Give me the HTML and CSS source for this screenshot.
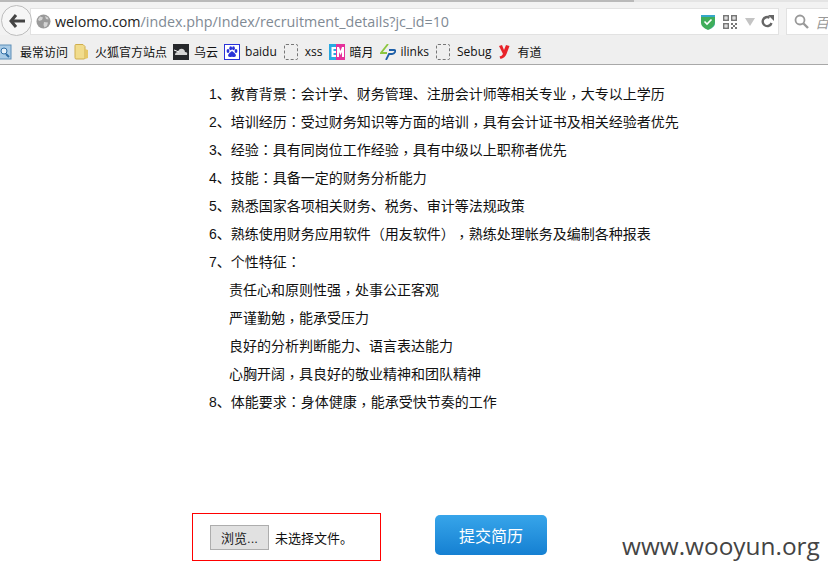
FILE: index.html
```html
<!DOCTYPE html>
<html lang="en">
<head>
    <meta charset="UTF-8">
    <meta name="viewport" content="width=device-width, initial-scale=1.0">
    <title>招聘详情</title>
    <link rel="stylesheet" href="styles.css">
</head>
<body>
    <div class="tabstrip"></div>

    <!-- Browser toolbar -->
    <div class="toolbar">
        <div class="urlbar">
            <svg class="globe" width="15" height="15" viewBox="0 0 15 15"><circle cx="7.5" cy="7.5" r="7" fill="#9a9a9a"/><path d="M4 2.5l3 1-1 2.5-3 1-1-1.500zM8 8l4 .5-1 3.500-2.500 1.500L7.500 11zM9 2l3 1.500 .5 2-2.500-.5z" fill="#d4d4d4"/></svg>
            <span class="url"><span class="host">welomo.com</span>/index.php/Index/recruitment_details?jc_id=10</span>
            <svg class="shield" width="14" height="16" viewBox="0 0 14 16"><path d="M0 1h14v8q0 4-7 7Q0 13 0 9z" fill="#3fae5a"/><path d="M0 1h14v2H0zM7 16q7-3 7-7V7q0 6-7 9z" fill="#35a7c9"/><path d="M3.500 7.500l2.500 2.500 4.500-4.500" fill="none" stroke="#fff" stroke-width="1.600"/></svg>
            <svg class="qr" width="14" height="14" viewBox="0 0 14 14" fill="#777"><path d="M0 0h6v6H0zM1.500 1.500v3h3v-3zM8 0h6v6H8zM9.500 1.500v3h3v-3zM0 8h6v6H0zM1.500 9.500v3h3v-3zM8 8h2v2H8zM12 8h2v2h-2zM10 10h2v2h-2zM8 12h2v2H8zM12 12h2v2h-2zM2.500 2.500h1v1h-1zM10.500 2.500h1v1h-1zM2.500 10.500h1v1h-1z"/></svg>
            <span class="dropdown"></span>
            <svg class="reload" width="13" height="13" viewBox="0 0 13 13"><path d="M10.500 8A4.500 4.500 0 1 1 8.500 2.700" fill="none" stroke="#666" stroke-width="2.400"/><path d="M7 0h6v6z" fill="#666"/></svg>
        </div>
        <div class="searchbar">
            <svg width="15" height="15" viewBox="0 0 15 15"><circle cx="6" cy="6" r="4.500" fill="none" stroke="#999" stroke-width="1.800"/><path d="M9.500 9.500L14 14" stroke="#999" stroke-width="2.400"/></svg>
            <span class="search-text">百度</span>
        </div>
    </div>

    <!-- Back button sits over the url bar -->
    <div class="back-btn">
        <svg width="16" height="14" viewBox="0 0 16 14"><path d="M7 1L2 7l5 6M2 7h14" fill="none" stroke="#444" stroke-width="3"/></svg>
    </div>

    <!-- Bookmarks -->
    <div class="bookmarks">
        <span class="bm">
            <svg class="bm-icon" width="15" height="16" viewBox="0 0 15 16"><rect x="-2" y="1" width="13" height="14" fill="#a9cbe6" stroke="#5f8fb8"/><circle cx="4" cy="7" r="3" fill="#e8f2fa" stroke="#2f6ea5"/><path d="M6 10l3 3" stroke="#2f6ea5" stroke-width="2"/></svg>最常访问
        </span>
        <span class="bm">
            <svg class="bm-icon" width="16" height="16" viewBox="0 0 16 16"><path d="M1 1.500q0-1 1-1h7l2 2v11q0 1.500-1 1.500H2q-1 0-1-1.500z" fill="#f1dc8c" stroke="#cfae4e"/><path d="M11 5l3 1v8l-3 1z" fill="#e6c766"/></svg>火狐官方站点
        </span>
        <span class="bm">
            <svg class="bm-icon" width="16" height="16" viewBox="0 0 16 16"><rect width="16" height="16" fill="#26282b"/><path d="M2 11q0-3 3-3 1-4 5-3 2 1 2 3 3 0 2 3z" fill="#d5d5d5"/><path d="M1 6l5 2" stroke="#fff"/></svg>乌云
        </span>
        <span class="bm">
            <svg class="bm-icon" width="16" height="16" viewBox="0 0 16 16"><rect x=".5" y=".5" width="15" height="15" fill="#fff" stroke="#2a32d8"/><g fill="#2a32d8"><ellipse cx="4" cy="7" rx="1.400" ry="2"/><ellipse cx="6.700" cy="4.300" rx="1.400" ry="2"/><ellipse cx="9.500" cy="4.300" rx="1.400" ry="2"/><ellipse cx="12" cy="7" rx="1.400" ry="2"/><path d="M8 7q-3 2-4 4 0 2.500 2.500 2 1.500-.5 3 0 2.500.5 2.500-2-1-2-4-4z"/></g></svg>baidu
        </span>
        <span class="bm">
            <span class="bm-blank"></span>xss
        </span>
        <span class="bm">
            <svg class="bm-icon" width="16" height="16" viewBox="0 0 16 16"><path d="M0 0h7v16H0z" fill="#29a9e1"/><path d="M2.500 3H7v2H4.500v2H7v2H4.500v2H7v2H2.500z" fill="#fff"/><path d="M7 0h9v16H7z" fill="#e5329b"/><path d="M8 3h2l1.500 4L13 3h2v10h-2V8l-1.500 3L10 8v5H8z" fill="#fff"/></svg>暗月
        </span>
        <span class="bm">
            <svg class="bm-icon" width="16" height="16" viewBox="0 0 16 16"><path d="M8 0L1 9h6" fill="none" stroke="#8cc63f" stroke-width="1.800"/><path d="M9 6h5q2 0 1 2-1 2-3 2H9l-3 6" fill="none" stroke="#1d5fa8" stroke-width="1.800"/></svg>ilinks
        </span>
        <span class="bm">
            <span class="bm-blank"></span>Sebug
        </span>
        <span class="bm">
            <svg class="bm-icon" width="15" height="14" viewBox="0 0 15 14"><path d="M1 1l3-1 2 5 2-5 3.500 1-3 8q-1.500 4-6 5l-1-2.500q2.500-.5 3.500-2.500z" fill="#e8232a"/></svg>有道
        </span>
    </div>

    <main class="page">
        <ul class="duties">
            <li>1、教育背景<span class="mid">：</span>会计学、财务管理、注册会计师等相关专业<span class="mid comma">，</span>大专以上学历</li>
            <li>2、培训经历<span class="mid">：</span>受过财务知识等方面的培训<span class="mid comma">，</span>具有会计证书及相关经验者优先</li>
            <li>3、经验<span class="mid">：</span>具有同岗位工作经验<span class="mid comma">，</span>具有中级以上职称者优先</li>
            <li>4、技能<span class="mid">：</span>具备一定的财务分析能力</li>
            <li>5、熟悉国家各项相关财务、税务、审计等法规政策</li>
            <li>6、熟练使用财务应用软件（用友软件）<span class="mid comma">，</span>熟练处理帐务及编制各种报表</li>
            <li>7、个性特征<span class="mid">：</span></li>
            <li class="sub">责任心和原则性强<span class="mid comma">，</span>处事公正客观</li>
            <li class="sub">严谨勤勉<span class="mid comma">，</span>能承受压力</li>
            <li class="sub">良好的分析判断能力、语言表达能力</li>
            <li class="sub">心胸开阔<span class="mid comma">，</span>具良好的敬业精神和团队精神</li>
            <li>8、体能要求<span class="mid">：</span>身体健康<span class="mid comma">，</span>能承受快节奏的工作</li>
        </ul>

        <div class="apply-row">
            <div class="file-box">
                <span class="file-btn">浏览...</span>
                <span class="file-name">未选择文件。</span>
            </div>
            <a class="submit-btn">提交简历</a>
        </div>
    </main>

    <div class="watermark">www.wooyun.org</div>
</body>
</html>
```

FILE: styles.css
```css
body {
    font-family: "Liberation Sans", "Noto Sans CJK SC", sans-serif;
    margin: 0;
    padding: 0;
    height: 576px;
    overflow: hidden;
    background-color: #fff;
    color: #111;
    position: relative;
    text-spacing-trim: space-all;
}

.tabstrip {
    height: 2px;
    background: linear-gradient(to right, #b9b9b9 634px, #e4e4e4 634px);
}

/* Toolbar */
.toolbar {
    height: 33px;
    background-color: #f2f2f2;
    display: flex;
    align-items: flex-start;
    padding: 6px 0 0 30px;
    box-sizing: border-box;
    gap: 7px;
}

.urlbar {
    width: 749px;
    height: 27px;
    flex: none;
    background-color: #fff;
    border: 1px solid #e2e2e2;
    box-sizing: border-box;
    display: flex;
    align-items: center;
    padding: 0 4px 0 5px;
}

.globe {
    flex: none;
}

.url {
    margin-left: 4px;
    font-family: "Open Sans", sans-serif;
    font-size: 14.3px;
    color: #7f8a94;
    white-space: nowrap;
    flex: 1;
}

.host {
    color: #222;
}

.shield {
    margin-right: 8px;
}

.qr {
    margin-right: 8px;
}

.dropdown {
    width: 0;
    height: 0;
    border-left: 5px solid transparent;
    border-right: 5px solid transparent;
    border-top: 8px solid #c4c4c4;
    margin-right: 6px;
}

.searchbar {
    flex: 1;
    height: 27px;
    background-color: #fff;
    border: 1px solid #e2e2e2;
    border-right: none;
    box-sizing: border-box;
    display: flex;
    align-items: center;
    padding-left: 7px;
    gap: 6px;
    overflow: hidden;
    white-space: nowrap;
}

.searchbar svg {
    flex: none;
}

.search-text {
    font-size: 14px;
    font-style: italic;
    color: #999;
}

.back-btn {
    position: absolute;
    left: 1px;
    top: 5px;
    width: 31px;
    height: 31px;
    box-sizing: border-box;
    border: 1px solid #bdbdbd;
    border-radius: 50%;
    background-color: #f6f6f6;
    display: flex;
    align-items: center;
    justify-content: center;
}

/* Bookmarks */
.bookmarks {
    height: 30px;
    box-sizing: border-box;
    background-color: #efefef;
    border-bottom: 1px solid #a8a8a8;
    display: flex;
    align-items: center;
    padding-top: 4px;
    gap: 6px;
    font-family: "Open Sans", "Noto Sans CJK SC", sans-serif;
    font-size: 12px;
    color: #111;
    white-space: nowrap;
}

.bm {
    display: flex;
    align-items: center;
}

.bm-icon {
    margin-right: 5px;
    flex: none;
}

.bm-blank {
    width: 12px;
    height: 14px;
    margin-left: 1px;
    margin-right: 7px;
    border: 1px dashed #777;
    border-radius: 2px;
}

/* Page */
.page {
    padding-top: 15px;
}

.duties {
    list-style: none;
    margin: 0 0 0 209px;
    padding: 0;
    font-size: 14px;
    line-height: 28px;
}

.duties li {
    height: 28px;
}

.sub {
    padding-left: 20px;
}

/* colon and comma sit in the middle of their box, as in the original font */
.mid {
    font-family: "Noto Sans CJK TC", sans-serif;
    line-height: 0;
}

.comma {
    vertical-align: -3px;
}

.apply-row {
    display: flex;
    align-items: center;
    margin: 97px 0 0 192px;
    gap: 54px;
}

.file-box {
    width: 189px;
    height: 48px;
    box-sizing: border-box;
    border: 1px solid #f00;
    display: flex;
    align-items: center;
    padding-left: 17px;
    gap: 6px;
    font-size: 13px;
}

.file-btn {
    width: 59px;
    height: 25px;
    box-sizing: border-box;
    background-color: #e1e1e1;
    border: 1px solid #adadad;
    display: flex;
    align-items: center;
    justify-content: center;
    color: #222;
}

.submit-btn {
    width: 112px;
    height: 40px;
    margin-bottom: 4px;
    border-radius: 5px;
    background: linear-gradient(to bottom, #37a5ea, #1580d2);
    color: #fff;
    font-size: 16px;
    display: flex;
    align-items: center;
    justify-content: center;
}

.watermark {
    position: absolute;
    left: 622px;
    top: 529px;
    font-family: "Open Sans", sans-serif;
    font-size: 24.4px;
    color: #444;
    white-space: nowrap;
}
```
